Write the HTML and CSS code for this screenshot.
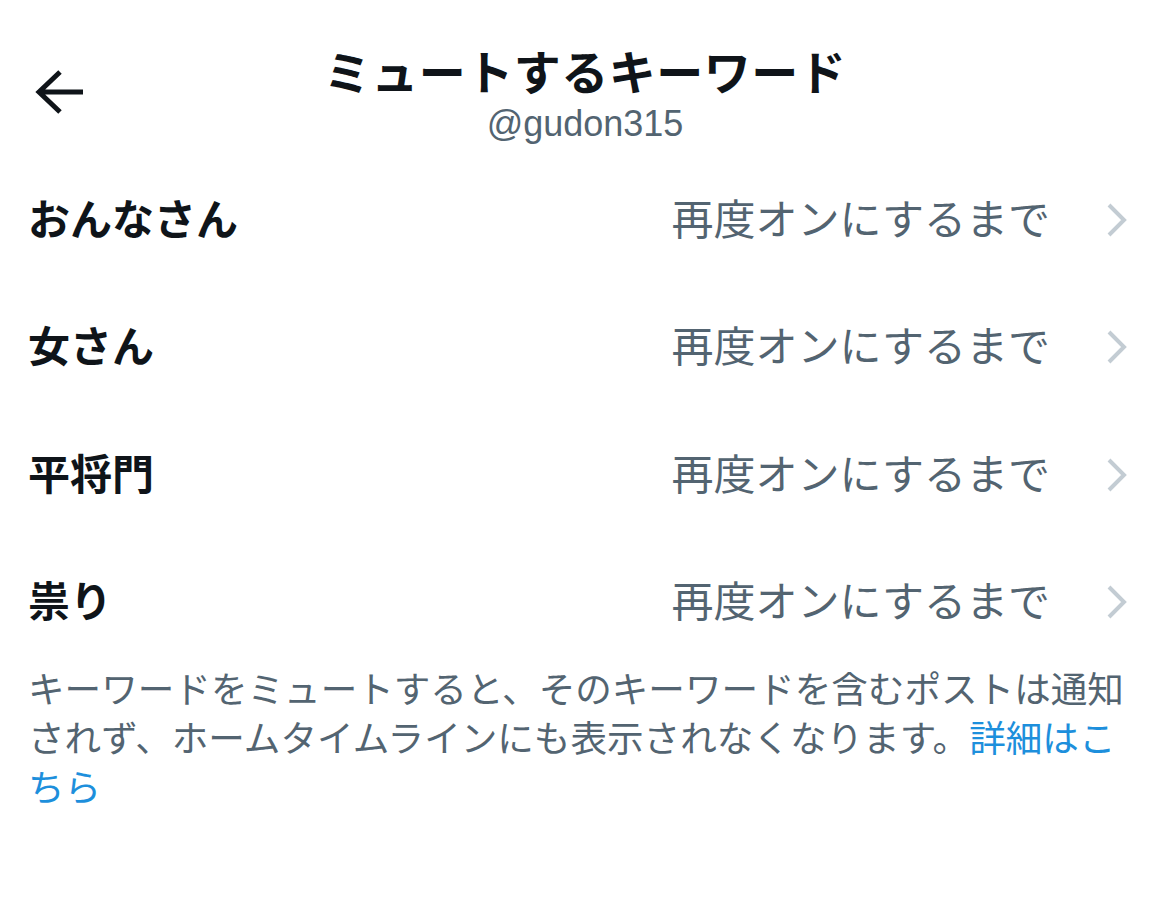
FILE: index.html
```html
<!DOCTYPE html>
<html lang="ja">
<head>
<meta charset="utf-8">
<link rel="stylesheet" href="styles.css">
</head>
<body>
<div class="page">
  <header class="nav">
    <div class="nav-left">
      <svg class="back" width="50" height="44" viewBox="0 0 50 44">
        <path d="M3 22 H48 M25 2 L4 22 L25 42" fill="none" stroke="#0f1419" stroke-width="5"/>
      </svg>
    </div>
    <div class="nav-title">
      <div class="title">ミュートするキーワード</div>
      <div class="handle">@gudon315</div>
    </div>
    <div class="nav-right"></div>
  </header>
  <ul class="list">
    <li class="row"><span class="word">おんなさん</span><span class="dur">再度オンにするまで</span><svg class="chev" width="22" height="36" viewBox="0 0 22 36"><path d="M3 3 L18 18 L3 33" fill="none" stroke="#c3ccd3" stroke-width="4"/></svg></li>
    <li class="row"><span class="word">女さん</span><span class="dur">再度オンにするまで</span><svg class="chev" width="22" height="36" viewBox="0 0 22 36"><path d="M3 3 L18 18 L3 33" fill="none" stroke="#c3ccd3" stroke-width="4"/></svg></li>
    <li class="row"><span class="word">平将門</span><span class="dur">再度オンにするまで</span><svg class="chev" width="22" height="36" viewBox="0 0 22 36"><path d="M3 3 L18 18 L3 33" fill="none" stroke="#c3ccd3" stroke-width="4"/></svg></li>
    <li class="row"><span class="word">祟り</span><span class="dur">再度オンにするまで</span><svg class="chev" width="22" height="36" viewBox="0 0 22 36"><path d="M3 3 L18 18 L3 33" fill="none" stroke="#c3ccd3" stroke-width="4"/></svg></li>
  </ul>
  <p class="note">キーワードをミュートすると、そのキーワードを含むポストは通知されず、ホームタイムラインにも表示されなくなります。<a class="link" href="#">詳細はこちら</a></p>
</div>
</body>
</html>
```
FILE: styles.css
```css
* { box-sizing: border-box; }
html, body {
  margin: 0;
  padding: 0;
  background: #ffffff;
}
body {
  font-family: "Noto Sans CJK JP", "Noto Sans", sans-serif;
  color: #0f1419;
}
.page {
  width: 1170px;
  height: 916px;
  overflow: hidden;
}
.nav {
  display: grid;
  grid-template-columns: 1fr auto 1fr;
  padding-top: 41px;
  height: 153px;
}
.nav-left {
  padding-left: 35px;
  padding-top: 29px;
}
.back { display: block; }
.nav-title {
  display: flex;
  flex-direction: column;
  align-items: center;
}
.title {
  font-size: 47px;
  font-weight: 700;
  line-height: 58px;
  letter-spacing: 0.5px;
}
.handle {
  font-family: "Liberation Sans", Arial, sans-serif;
  font-size: 36px;
  line-height: 42px;
  color: #536471;
  margin-top: 4px;
}
.list {
  list-style: none;
  margin: 0;
  padding: 0;
}
.row {
  display: flex;
  align-items: center;
  height: 127.5px;
  padding: 0 42px 0 28px;
}
.word {
  flex: 1;
  font-size: 42px;
  font-weight: 700;
  line-height: 60px;
}
.dur {
  font-size: 42px;
  line-height: 60px;
  color: #536471;
}
.chev {
  display: block;
  margin-left: 56px;
  margin-top: 6px;
}
.note {
  margin: 0;
  padding: 0 28px;
  font-size: 36.6px;
  line-height: 49px;
  color: #536471;
}
.link {
  color: #1d8fdc;
  text-decoration: none;
}
```
